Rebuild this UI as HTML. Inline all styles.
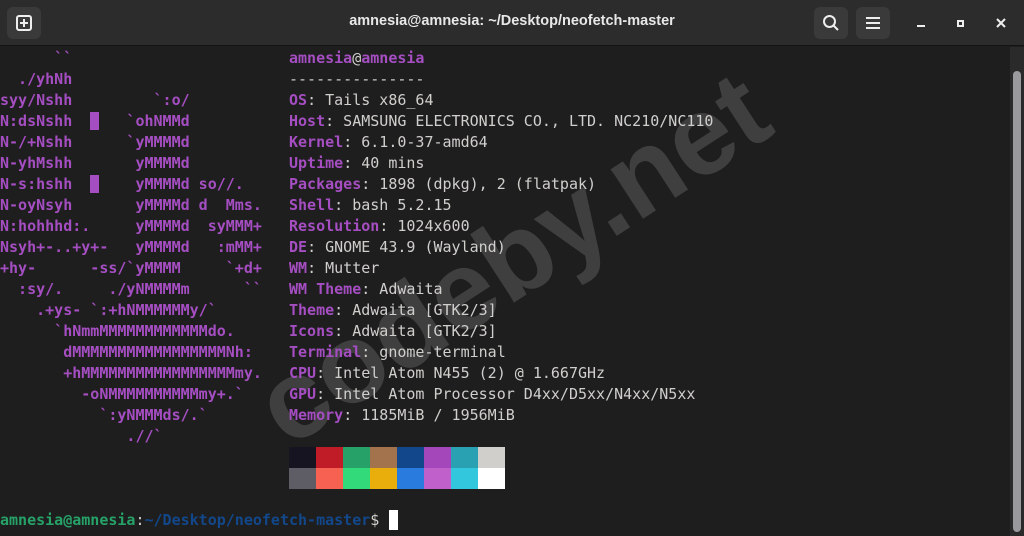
<!DOCTYPE html>
<html><head><meta charset="utf-8"><style>
*{margin:0;padding:0;box-sizing:border-box}
body{width:1024px;height:536px;background:#1e1e1e;overflow:hidden;position:relative;font-family:"DejaVu Sans Mono","Liberation Mono",monospace}
.tb{position:absolute;left:0;top:0;width:1024px;height:46px;background:#2c2c2c;border-bottom:1px solid #141414}
.btn{position:absolute;top:7px;width:34px;height:32px;background:#3a3a3a;border-radius:6px}
.title{position:absolute;left:0;width:1024px;top:13px;text-align:center;color:#e8e8e8;font:bold 14.5px "Liberation Sans","DejaVu Sans",sans-serif}
pre{position:absolute;font-family:"DejaVu Sans Mono",monospace;font-size:15px;line-height:21px;white-space:pre}
.p{color:#a54ec2;font-weight:bold}
.w{color:#d0cfcc}
.art{left:0;top:48px;color:#a54ec2;font-weight:bold}
.info{left:289px;top:48px}
.sw{position:absolute;width:27px;height:21px}
.sb{position:absolute;left:1010px;top:47px;width:14px;height:489px;background:#2a2a2a}
.th{position:absolute;left:1013px;top:71px;width:8px;height:461px;background:#9a9a9e;border-radius:4px}
.wm{position:absolute;left:512px;top:258px;transform:translate(-50%,-50%) rotate(-33deg);font:bold 112px "Liberation Sans",sans-serif;color:rgba(110,110,110,0.42);white-space:nowrap}
</style></head><body>
<div class="tb">
<div class="btn" style="left:7px"><svg width="34" height="32" viewBox="0 0 34 32"><rect x="10" y="9" width="14" height="14" rx="2" fill="none" stroke="#eee" stroke-width="2"/><path d="M17 12v8M13 16h8" stroke="#eee" stroke-width="2"/></svg></div>
<div class="title">amnesia@amnesia: ~/Desktop/neofetch-master</div>
<div class="btn" style="left:814px"><svg width="34" height="32" viewBox="0 0 34 32"><circle cx="15.5" cy="14.5" r="5.5" fill="none" stroke="#eee" stroke-width="2"/><path d="M19.5 18.5l4.5 4.5" stroke="#eee" stroke-width="2"/></svg></div>
<div class="btn" style="left:856px"><svg width="34" height="32" viewBox="0 0 34 32"><path d="M10 11h14M10 16h14M10 21h14" stroke="#eee" stroke-width="2"/></svg></div>
<div style="position:absolute;left:917px;top:25px;width:8px;height:2px;background:#eee"></div>
<div style="position:absolute;left:957px;top:20px;width:7px;height:7px;border:2px solid #eee"></div>
<svg style="position:absolute;left:995px;top:17px" width="12" height="12" viewBox="0 0 12 12"><path d="M2 2l8 8M10 2l-8 8" stroke="#eee" stroke-width="2"/></svg>
</div>
<div class="wm">codeby.net</div>
<pre class="art">      ``
  ./yhNh
syy/Nshh         `:o/
N:dsNshh  <span style="background:#a54ec2"> </span>   `ohNMMd
N-/+Nshh      `yMMMMd
N-yhMshh       yMMMMd
N-s:hshh  <span style="background:#a54ec2"> </span>    yMMMMd so//.
N-oyNsyh       yMMMMd d  Mms.
N:hohhhd:.     yMMMMd  syMMM+
Nsyh+-..+y+-   yMMMMd   :mMM+
+hy-      -ss/`yMMMM     `+d+
  :sy/.     ./yNMMMMm      ``
    .+ys- `:+hNMMMMMMy/`
      `hNmmMMMMMMMMMMMMdo.
       dMMMMMMMMMMMMMMMMMNh:
       +hMMMMMMMMMMMMMMMMMmy.
         -oNMMMMMMMMMMmy+.`
           `:yNMMMds/.`
              .//`</pre>
<pre class="info w"><span class="p">amnesia</span>@<span class="p">amnesia</span>
---------------
<span class="p">OS</span>: Tails x86_64
<span class="p">Host</span>: SAMSUNG ELECTRONICS CO., LTD. NC210/NC110
<span class="p">Kernel</span>: 6.1.0-37-amd64
<span class="p">Uptime</span>: 40 mins
<span class="p">Packages</span>: 1898 (dpkg), 2 (flatpak)
<span class="p">Shell</span>: bash 5.2.15
<span class="p">Resolution</span>: 1024x600
<span class="p">DE</span>: GNOME 43.9 (Wayland)
<span class="p">WM</span>: Mutter
<span class="p">WM Theme</span>: Adwaita
<span class="p">Theme</span>: Adwaita [GTK2/3]
<span class="p">Icons</span>: Adwaita [GTK2/3]
<span class="p">Terminal</span>: gnome-terminal
<span class="p">CPU</span>: Intel Atom N455 (2) @ 1.667GHz
<span class="p">GPU</span>: Intel Atom Processor D4xx/D5xx/N4xx/N5xx
<span class="p">Memory</span>: 1185MiB / 1956MiB</pre>
<div class="sw" style="left:289px;top:447px;background:#171421"></div>
<div class="sw" style="left:316px;top:447px;background:#c01c28"></div>
<div class="sw" style="left:343px;top:447px;background:#26a269"></div>
<div class="sw" style="left:370px;top:447px;background:#a2734c"></div>
<div class="sw" style="left:397px;top:447px;background:#12488b"></div>
<div class="sw" style="left:424px;top:447px;background:#a347ba"></div>
<div class="sw" style="left:451px;top:447px;background:#2aa1b3"></div>
<div class="sw" style="left:478px;top:447px;background:#d0cfcc"></div>
<div class="sw" style="left:289px;top:468px;background:#5e5c64"></div>
<div class="sw" style="left:316px;top:468px;background:#f66151"></div>
<div class="sw" style="left:343px;top:468px;background:#33da7a"></div>
<div class="sw" style="left:370px;top:468px;background:#e9ad0c"></div>
<div class="sw" style="left:397px;top:468px;background:#2a7bde"></div>
<div class="sw" style="left:424px;top:468px;background:#c061cb"></div>
<div class="sw" style="left:451px;top:468px;background:#33c7de"></div>
<div class="sw" style="left:478px;top:468px;background:#ffffff"></div>
<pre style="left:0;top:510px" class="w"><span style="color:#26a269;font-weight:bold">amnesia@amnesia</span>:<span style="color:#12488b;font-weight:bold">~/Desktop/neofetch-master</span>$ </pre>
<div style="position:absolute;left:389px;top:510px;width:9px;height:20px;background:#fff"></div>
<div class="sb"></div><div class="th"></div>
</body></html>
